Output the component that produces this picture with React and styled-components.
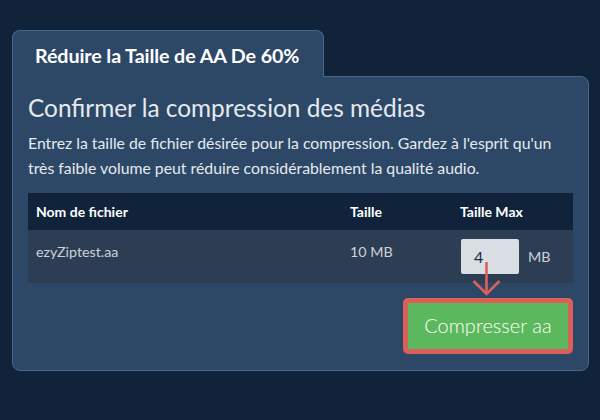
import React from 'react'
import styled, { createGlobalStyle } from 'styled-components'

const GlobalStyle = createGlobalStyle`
  html, body {
    margin: 0;
    padding: 0;
    background: #11233a;
    font-family: Lato, "Open Sans", sans-serif;
  }
`

const Page = styled.div`
  width: 600px;
  height: 420px;
  box-sizing: border-box;
  padding: 30px 11px 0 12px;
`

const Tab = styled.div`
  position: relative;
  z-index: 1;
  width: 312px;
  height: 47px;
  box-sizing: border-box;
  margin-bottom: -1px;
  padding: 13px 0 0 22px;
  background: #2c4866;
  border: 1px solid #4b6786;
  border-bottom: none;
  border-radius: 8px 8px 0 0;
  color: #ffffff;
  font-size: 19.7px;
  font-weight: 700;
  letter-spacing: -0.1px;
`

const Panel = styled.div`
  box-sizing: border-box;
  background: #2c4866;
  border: 1px solid #4b6786;
  border-radius: 0 8px 8px 8px;
  padding: 15px 15px 16px 15px;
  display: flex;
  flex-direction: column;
`

const Heading = styled.h2`
  margin: 0;
  color: #e6eaef;
  font-size: 24.4px;
  font-weight: 400;
  line-height: 31px;
`

const Lead = styled.p`
  margin: 7px 0 0;
  color: #e6eaef;
  font-size: 15.8px;
  line-height: 25px;
`

const Table = styled.div`
  margin-top: 13px;
  display: grid;
  grid-template-columns: 314px 110px 1fr;
`

const HeadCell = styled.div`
  height: 37px;
  display: flex;
  align-items: center;
  padding-left: 8px;
  background: #10233a;
  color: #ffffff;
  font-size: 14px;
  font-weight: 700;
`

const Cell = styled.div`
  position: relative;
  height: 53px;
  box-sizing: border-box;
  padding: 13px 0 0 8px;
  background: #2d3e54;
  color: #ccd2da;
  font-size: 14.3px;
`

const SizeField = styled.div`
  display: flex;
  align-items: center;
  gap: 9px;
  margin: -4px 0 0 1px;
`

const SizeInput = styled.div`
  width: 58px;
  height: 35px;
  box-sizing: border-box;
  padding: 8px 0 0 13px;
  background: #d9dde4;
  border-radius: 2px;
  color: #1f2a38;
  font-size: 16px;
`

const Unit = styled.span`
  color: #ccd2da;
  font-size: 14.3px;
`

const Arrow = styled.svg`
  position: absolute;
  left: 20px;
  top: 31px;
  overflow: visible;
`

const Actions = styled.div`
  display: flex;
  justify-content: flex-end;
  margin-top: 15px;
`

const Button = styled.button`
  width: 170px;
  height: 56px;
  box-sizing: border-box;
  background: #5cb85c;
  border: 5px solid #dc5f5a;
  border-radius: 5px;
  color: #ffffff;
  font-family: Lato, "Open Sans", sans-serif;
  font-size: 20px;
  font-weight: 300;
  padding: 0 0 2px;
`

const App = () => {
  return (
    <Page>
      <GlobalStyle />
      <Tab>Réduire la Taille de AA De 60%</Tab>
      <Panel>
        <Heading>Confirmer la compression des médias</Heading>
        <Lead>
          Entrez la taille de fichier désirée pour la compression. Gardez à l'esprit qu'un
          très faible volume peut réduire considérablement la qualité audio.
        </Lead>
        <Table>
          <HeadCell>Nom de fichier</HeadCell>
          <HeadCell>Taille</HeadCell>
          <HeadCell>Taille Max</HeadCell>
          <Cell>ezyZiptest.aa</Cell>
          <Cell>10 MB</Cell>
          <Cell>
            <SizeField>
              <SizeInput>4</SizeInput>
              <Unit>MB</Unit>
            </SizeField>
            <Arrow width="30" height="40" viewBox="0 0 30 40">
              <line x1="14.5" y1="1" x2="14.5" y2="33" stroke="#dc5f5a" strokeWidth="2.6" />
              <polyline points="1.5,20 14.5,33 27.5,20" fill="none" stroke="#dc5f5a" strokeWidth="2.6" />
            </Arrow>
          </Cell>
        </Table>
        <Actions>
          <Button>Compresser aa</Button>
        </Actions>
      </Panel>
    </Page>
  )
}

export default App
